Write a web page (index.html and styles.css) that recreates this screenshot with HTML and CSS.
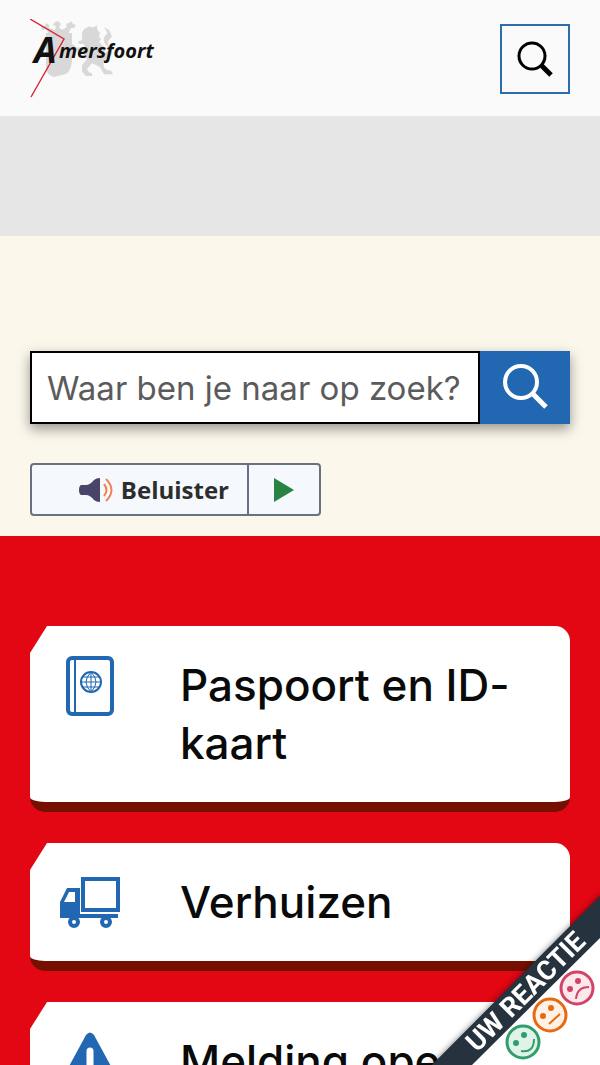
FILE: index.html
```html
<!DOCTYPE html>
<html lang="nl">
<head>
    <meta charset="utf-8">
    <title>Gemeente Amersfoort</title>
    <meta name="viewport" content="width=device-width, initial-scale=1.0">
    <link rel="stylesheet" href="styles.css">
</head>
<body>
    <header class="header">
        <a class="logo" href="#" aria-label="Amersfoort, naar de homepage">
            <svg width="130" height="80" viewBox="0 0 130 80">
                <g fill="#d8d8d8">
                    <path d="M16 14h26v28q-1 10-6 13l-12 3q-7-2-8-8z"/>
                    <path d="M19 13l-3-5-4 1-1-4 4 0 1-3 3 2 0 3 6 2 1-4-3-1 2-3 3-1 3 3-2 3 3 3 5-3-1-3 3-1 2-2 2 3 3 1-2 3-3 0-3 6z" transform="translate(0 2)"/>
                    <path d="M54 14l2-4 5-3 4 1 4-2 0 4 3 4-1 4 2 3-2 3 5 5 1 7 3-2q2-3-2-7q-4-5-1-10q3-2 2-4l-3-5 5 3 3 7-4 5q-1 3 3 8q3 6-2 10l-6 4 1 7 4 3 3 0 2 4h-9l-4-8-8-4-5 6 2 4 3 1v3h-6l-4-5 0-7 5-6-3-7-6-3-6 3-4-3 3-3-4-3 5-1 5 4 8 0-1-4-5 0-1-3 4-1z" transform="translate(-2 1) scale(1 .92)"/>
                </g>
                <path d="M0 0l34 20L1 78" fill="none" stroke="#d92333" stroke-width="1.4"/>
                <text class="logo-initial" x="4" y="44">A</text>
                <text class="logo-name" x="29" y="39">mersfoort</text>
            </svg>
        </a>
        <button class="header-search" type="button" aria-label="Zoeken">
            <svg width="36" height="36" viewBox="0 0 36 36" fill="none" stroke="#000">
                <circle cx="15" cy="15" r="13" stroke-width="3"/>
                <path d="M24 24l10 10" stroke-width="5"/>
            </svg>
        </button>
    </header>

    <div class="banner"></div>

    <section class="intro">
        <form class="search">
            <input class="search-input" type="text" aria-label="Zoeken" placeholder="Waar ben je naar op zoek?">
            <button class="search-button" type="submit" aria-label="Zoek">
                <svg width="48" height="48" viewBox="0 0 48 48" fill="none" stroke="#fff">
                    <circle cx="20" cy="18" r="16" stroke-width="4"/>
                    <path d="M31 29l14 14" stroke-width="5"/>
                </svg>
            </button>
        </form>
        <div class="listen">
            <button class="listen-main" type="button">
                <svg width="34" height="26" viewBox="0 0 34 26">
                    <path d="M2 8h5q4 0 8-5q2-2 6-2v24q-4 0-6-2q-4-5-8-5H2q-2-1-2-5t2-5z" fill="#484568"/>
                    <path d="M25 7q5 6 0 12M27 2q11 11 0 22" fill="none" stroke="#ee8355" stroke-width="2"/>
                </svg>
                Beluister
            </button>
            <button class="listen-play" type="button" aria-label="Afspelen">
                <svg width="20" height="24" viewBox="0 0 20 24"><path d="M0 0l20 12L0 24z" fill="#288345"/></svg>
            </button>
        </div>
    </section>

    <main class="tasks">
        <a class="card" href="#">
            <svg class="card-icon" viewBox="0 0 60 60" fill="none" stroke="#2267b1">
                <rect x="8" y="2" width="44" height="56" rx="4" stroke-width="4"/>
                <path d="M15 3v54" stroke-width="2"/>
                <circle cx="31" cy="26" r="10" stroke-width="2"/>
                <path d="M21 26h20M23 21h16M23 31h16M31 16v20M31 16q-10 10 0 20M31 16q10 10 0 20" stroke-width="1"/>
            </svg>
            <span class="card-title">Paspoort en ID-kaart</span>
        </a>
        <a class="card" href="#">
            <svg class="card-icon" viewBox="0 0 60 60">
                <path fill="#2267b1" fill-rule="evenodd" d="M21 4h39v35H21zM25 8v27h31V8zM0 29L7 15h13v26h38v4H0zM4 29h11V19H9z"/>
                <circle cx="14" cy="49" r="4" fill="#fff" stroke="#2267b1" stroke-width="4"/>
                <circle cx="46" cy="49" r="4" fill="#fff" stroke="#2267b1" stroke-width="4"/>
            </svg>
            <span class="card-title">Verhuizen</span>
        </a>
        <a class="card" href="#">
            <svg class="card-icon" viewBox="0 0 60 60">
                <path d="M26 3q4-5 8 0l25 46q2 6-4 7H5q-6-1-4-7z" fill="#2267b1"/>
                <path d="M30 19v18" stroke="#fff" stroke-width="7" stroke-linecap="round"/>
                <circle cx="30" cy="47" r="4" fill="#fff"/>
            </svg>
            <span class="card-title">Melding open&shy;bare ruimte</span>
        </a>
    </main>

    <a class="feedback" href="#" aria-label="Uw reactie">
        <svg width="170" height="170" viewBox="0 0 170 170">
            <path class="feedback-band" d="M174-3V216H-44z" fill="#26323e"/>
            <path d="M170 43V170H42z" fill="#fff"/>
            <text class="feedback-text" transform="translate(47 158) rotate(-45)">UW REACTIE</text>
            <g transform="translate(147 93)" fill="#fde8ec" stroke="#d14367" stroke-width="2">
                <circle r="16" stroke-width="3"/>
                <path d="M-1 11Q0-1 12-1"/>
                <circle cx="-7" cy="1" r="2" fill="#d14367"/>
                <circle cx="1" cy="-7" r="2" fill="#d14367"/>
            </g>
            <g transform="translate(120 120)" fill="#fff1e6" stroke="#e66a10" stroke-width="2">
                <circle r="16" stroke-width="3"/>
                <path d="M-1 9L10-1"/>
                <circle cx="-7" cy="1" r="2" fill="#e66a10"/>
                <circle cx="1" cy="-7" r="2" fill="#e66a10"/>
            </g>
            <g transform="translate(93 147)" fill="#dff3e9" stroke="#2f9e6b" stroke-width="2">
                <circle r="16" stroke-width="3"/>
                <path d="M-2 9Q11 11 11-3"/>
                <circle cx="-7" cy="1" r="2" fill="#2f9e6b"/>
                <circle cx="1" cy="-7" r="2" fill="#2f9e6b"/>
            </g>
        </svg>
    </a>
</body>
</html>
```
FILE: styles.css
```css
* {
    box-sizing: border-box;
}
body {
    margin: 0;
    background: #e30613;
    color: #0a0a0a;
    font-family: Inter, "Liberation Sans", sans-serif;
}
button {
    display: flex;
    align-items: center;
    justify-content: center;
    margin: 0;
    padding: 0;
    border: 0;
    cursor: pointer;
}

/* header */
.header {
    display: flex;
    justify-content: space-between;
    align-items: flex-start;
    padding: 19px 30px 17px;
    background: #fafafa;
}
.logo svg {
    display: block;
}
.logo-initial,
.logo-name {
    font-family: "Open Sans", sans-serif;
    font-weight: bold;
    font-style: italic;
    fill: #111;
}
.logo-initial {
    font-size: 36px;
}
.logo-name {
    font-size: 20px;
}
.header-search {
    width: 70px;
    height: 70px;
    margin-top: 5px;
    border: 2px solid #2e6cb0;
    background: #fafafa;
}
.banner {
    height: 120px;
    background: #e6e6e6;
}

/* search and read-aloud */
.intro {
    padding: 115px 30px 20px;
    background: #fcf7eb;
}
.search {
    display: flex;
    height: 73px;
    box-shadow: 0 5px 12px rgba(0, 0, 0, 0.4);
}
.search-input {
    flex: 1;
    min-width: 0;
    padding: 0 15px;
    border: 2px solid #000;
    border-radius: 0;
    background: #fff;
    font-family: inherit;
    font-size: 33px;
}
.search-input::placeholder {
    color: #5b5b5b;
}
.search-button {
    width: 90px;
    background: #2267b1;
}
.listen {
    display: flex;
    width: 291px;
    height: 53px;
    margin-top: 39px;
    border: 2px solid #6b7080;
    border-radius: 4px;
    background: #f5f9fd;
    overflow: hidden;
}
.listen-main {
    flex: 1;
    justify-content: flex-end;
    gap: 8px;
    padding-right: 18px;
    background: none;
    color: #2d2d2d;
    font: bold 24px "Open Sans", sans-serif;
}
.listen-play {
    width: 72px;
    border-left: 2px solid #6b7080;
    background: none;
}

/* top tasks */
.tasks {
    display: flex;
    flex-direction: column;
    gap: 31px;
    padding: 90px 30px 30px;
}
.card {
    display: flex;
    align-items: flex-start;
    gap: 60px;
    padding: 30px 10px 30px 30px;
    border-bottom: 10px solid #750f00;
    border-radius: 0 15px 15px 15px;
    background: #fff;
    color: inherit;
    text-decoration: none;
    clip-path: polygon(17px 0, 100% 0, 100% 100%, 0 100%, 0 27px);
}
.card-icon {
    flex: none;
    width: 60px;
    height: 60px;
    margin-bottom: -2px;
}
.card-title {
    font-size: 44px;
    font-weight: 500;
    line-height: 58px;
}

/* feedback corner */
.feedback {
    position: fixed;
    right: 0;
    bottom: 0;
}
.feedback svg {
    display: block;
    overflow: visible;
}
.feedback-band {
    filter: drop-shadow(0 0 3px rgba(0, 0, 0, 0.5));
}
.feedback-text {
    fill: #fff;
    font-family: Roboto, sans-serif;
    font-size: 27px;
    font-weight: bold;
}
```
